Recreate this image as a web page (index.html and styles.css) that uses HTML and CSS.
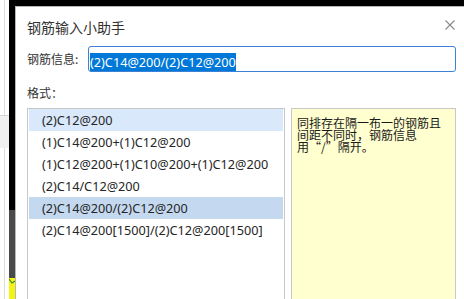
FILE: index.html
```html
<!DOCTYPE html>
<html lang="zh-CN">
<head>
<meta charset="utf-8">
<title>钢筋输入小助手</title>
<link rel="stylesheet" href="styles.css">
</head>
<body>
<div class="screen">
  <div class="left-strip">
    <div class="ls-top"><div class="ls-line"></div></div>
    <div class="ls-gray"></div>
    <div class="ls-bottom"><div class="ls-line"></div></div>
  </div>
  <div class="frame">
    <div class="frame-edge">
      <div class="fe-black"></div>
      <div class="fe-gray"></div>
      <div class="fe-yellow">
        <svg width="6" height="8" viewBox="0 0 6 8"><path d="M0 1 L3 5 L6 3" fill="none" stroke="#2f8a2a" stroke-width="1.2"/></svg>
      </div>
    </div>
    <div class="frame-main">
      <div class="frame-top"></div>
      <div class="dialog">
        <div class="title-row">
          <div class="title">钢筋输入小助手</div>
          <svg class="close" width="10" height="10" viewBox="0 0 10 10"><path d="M0.5 0.5 L9.5 9.5 M9.5 0.5 L0.5 9.5" stroke="#8a8a8a" stroke-width="1.1" fill="none"/></svg>
        </div>
        <div class="info-row">
          <div class="label">钢筋信息:</div>
          <div class="input"><span class="sel">(2)C14@200/(2)C12@200</span></div>
        </div>
        <div class="format-label">格式：</div>
        <div class="lists">
          <div class="list">
            <div class="item hover">(2)C12@200</div>
            <div class="item">(1)C14@200+(1)C12@200</div>
            <div class="item">(1)C12@200+(1)C10@200+(1)C12@200</div>
            <div class="item">(2)C14/C12@200</div>
            <div class="item selected">(2)C14@200/(2)C12@200</div>
            <div class="item">(2)C14@200[1500]/(2)C12@200[1500]</div>
          </div>
          <div class="hint">
            <div class="hint-line">同排存在隔一布一的钢筋且</div>
            <div class="hint-line">间距不同时，钢筋信息</div>
            <div class="hint-line">用“/”隔开。</div>
          </div>
        </div>
      </div>
    </div>
  </div>
</div>
</body>
</html>
```
FILE: styles.css
```css
html, body {
  margin: 0;
  padding: 0;
  background: #ffffff;
}
.screen {
  display: flex;
  width: 464px;
  height: 299px;
  overflow: hidden;
  font-family: "Noto Sans", "Noto Sans CJK SC", sans-serif;
  color: #2a2a2a;
}
.left-strip {
  width: 9px;
  display: flex;
  flex-direction: column;
  background: #ffffff;
}
.ls-top {
  height: 115px;
  border-bottom: 1px solid #d4d4d4;
  display: flex;
}
.ls-line {
  margin-left: 4px;
  border-left: 1px solid #dcdcdc;
  flex: 0 0 0;
}
.ls-gray {
  height: 32px;
  background: #f0f0f0;
}
.ls-bottom {
  flex: 1;
  display: flex;
}
.frame {
  flex: 1;
  display: flex;
  min-width: 0;
}
.frame-edge {
  width: 6px;
  display: flex;
  flex-direction: column;
}
.fe-black {
  height: 210px;
  background: #000000;
}
.fe-gray {
  height: 68px;
  background: #4a4a4a;
}
.fe-yellow {
  flex: 1;
  background: #f4f414;
  display: flex;
  align-items: flex-start;
}
.frame-main {
  flex: 1;
  display: flex;
  flex-direction: column;
  min-width: 0;
}
.frame-top {
  height: 6px;
  background: #000000;
}
.dialog {
  flex: 1;
  background: #ffffff;
  border-top: 1px solid #b8b8b8;
  border-left: 1px solid #b8b8b8;
  padding: 10px 8px 0 11px;
  display: flex;
  flex-direction: column;
  overflow: hidden;
}
.title-row {
  display: flex;
  justify-content: space-between;
  align-items: flex-start;
  height: 20px;
}
.title {
  font-family: "Noto Sans CJK SC", sans-serif;
  font-size: 14px;
  line-height: 20px;
  color: #333333;
}
.close {
  margin-top: 3px;
  margin-right: 1px;
}
.info-row {
  margin-top: 9px;
  display: flex;
  align-items: center;
}
.label {
  width: 61px;
  font-family: "Noto Sans CJK SC", sans-serif;
  font-size: 12px;
  line-height: 18px;
  color: #333333;
}
.input {
  flex: 1;
  height: 26px;
  box-sizing: border-box;
  border: 1px solid #3b82d6;
  border-radius: 3px;
  padding: 3px 1px;
}
.sel {
  display: inline-block;
  background: #0078d7;
  color: #ffffff;
  font-family: "Noto Sans", sans-serif;
  font-size: 12.7px;
  line-height: 18px;
  white-space: nowrap;
}
.format-label {
  margin-top: 12px;
  font-family: "Noto Sans CJK SC", sans-serif;
  font-size: 12px;
  line-height: 18px;
  color: #333333;
}
.lists {
  margin-top: 6px;
  height: 200px;
  flex: 0 0 auto;
  display: flex;
  gap: 6px;
}
.list {
  width: 258px;
  box-sizing: border-box;
  border: 1px solid #c8c8c8;
  padding: 0 1px;
  background: #ffffff;
}
.item {
  height: 22px;
  line-height: 22px;
  padding-left: 13px;
  font-family: "Noto Sans", sans-serif;
  font-size: 12.7px;
  white-space: nowrap;
  color: #262626;
}
.item.hover {
  background: #d9e8fb;
}
.item.selected {
  background: #c4d9f0;
}
.hint {
  flex: 1;
  background: #ffffd0;
  border: 1px solid #c8c8c8;
  padding: 8px 5px;
  font-family: "Noto Sans CJK SC", sans-serif;
  font-size: 12px;
  color: #1a1a1a;
}
.hint-line {
  height: 12px;
  line-height: 12px;
  white-space: nowrap;
}
```
